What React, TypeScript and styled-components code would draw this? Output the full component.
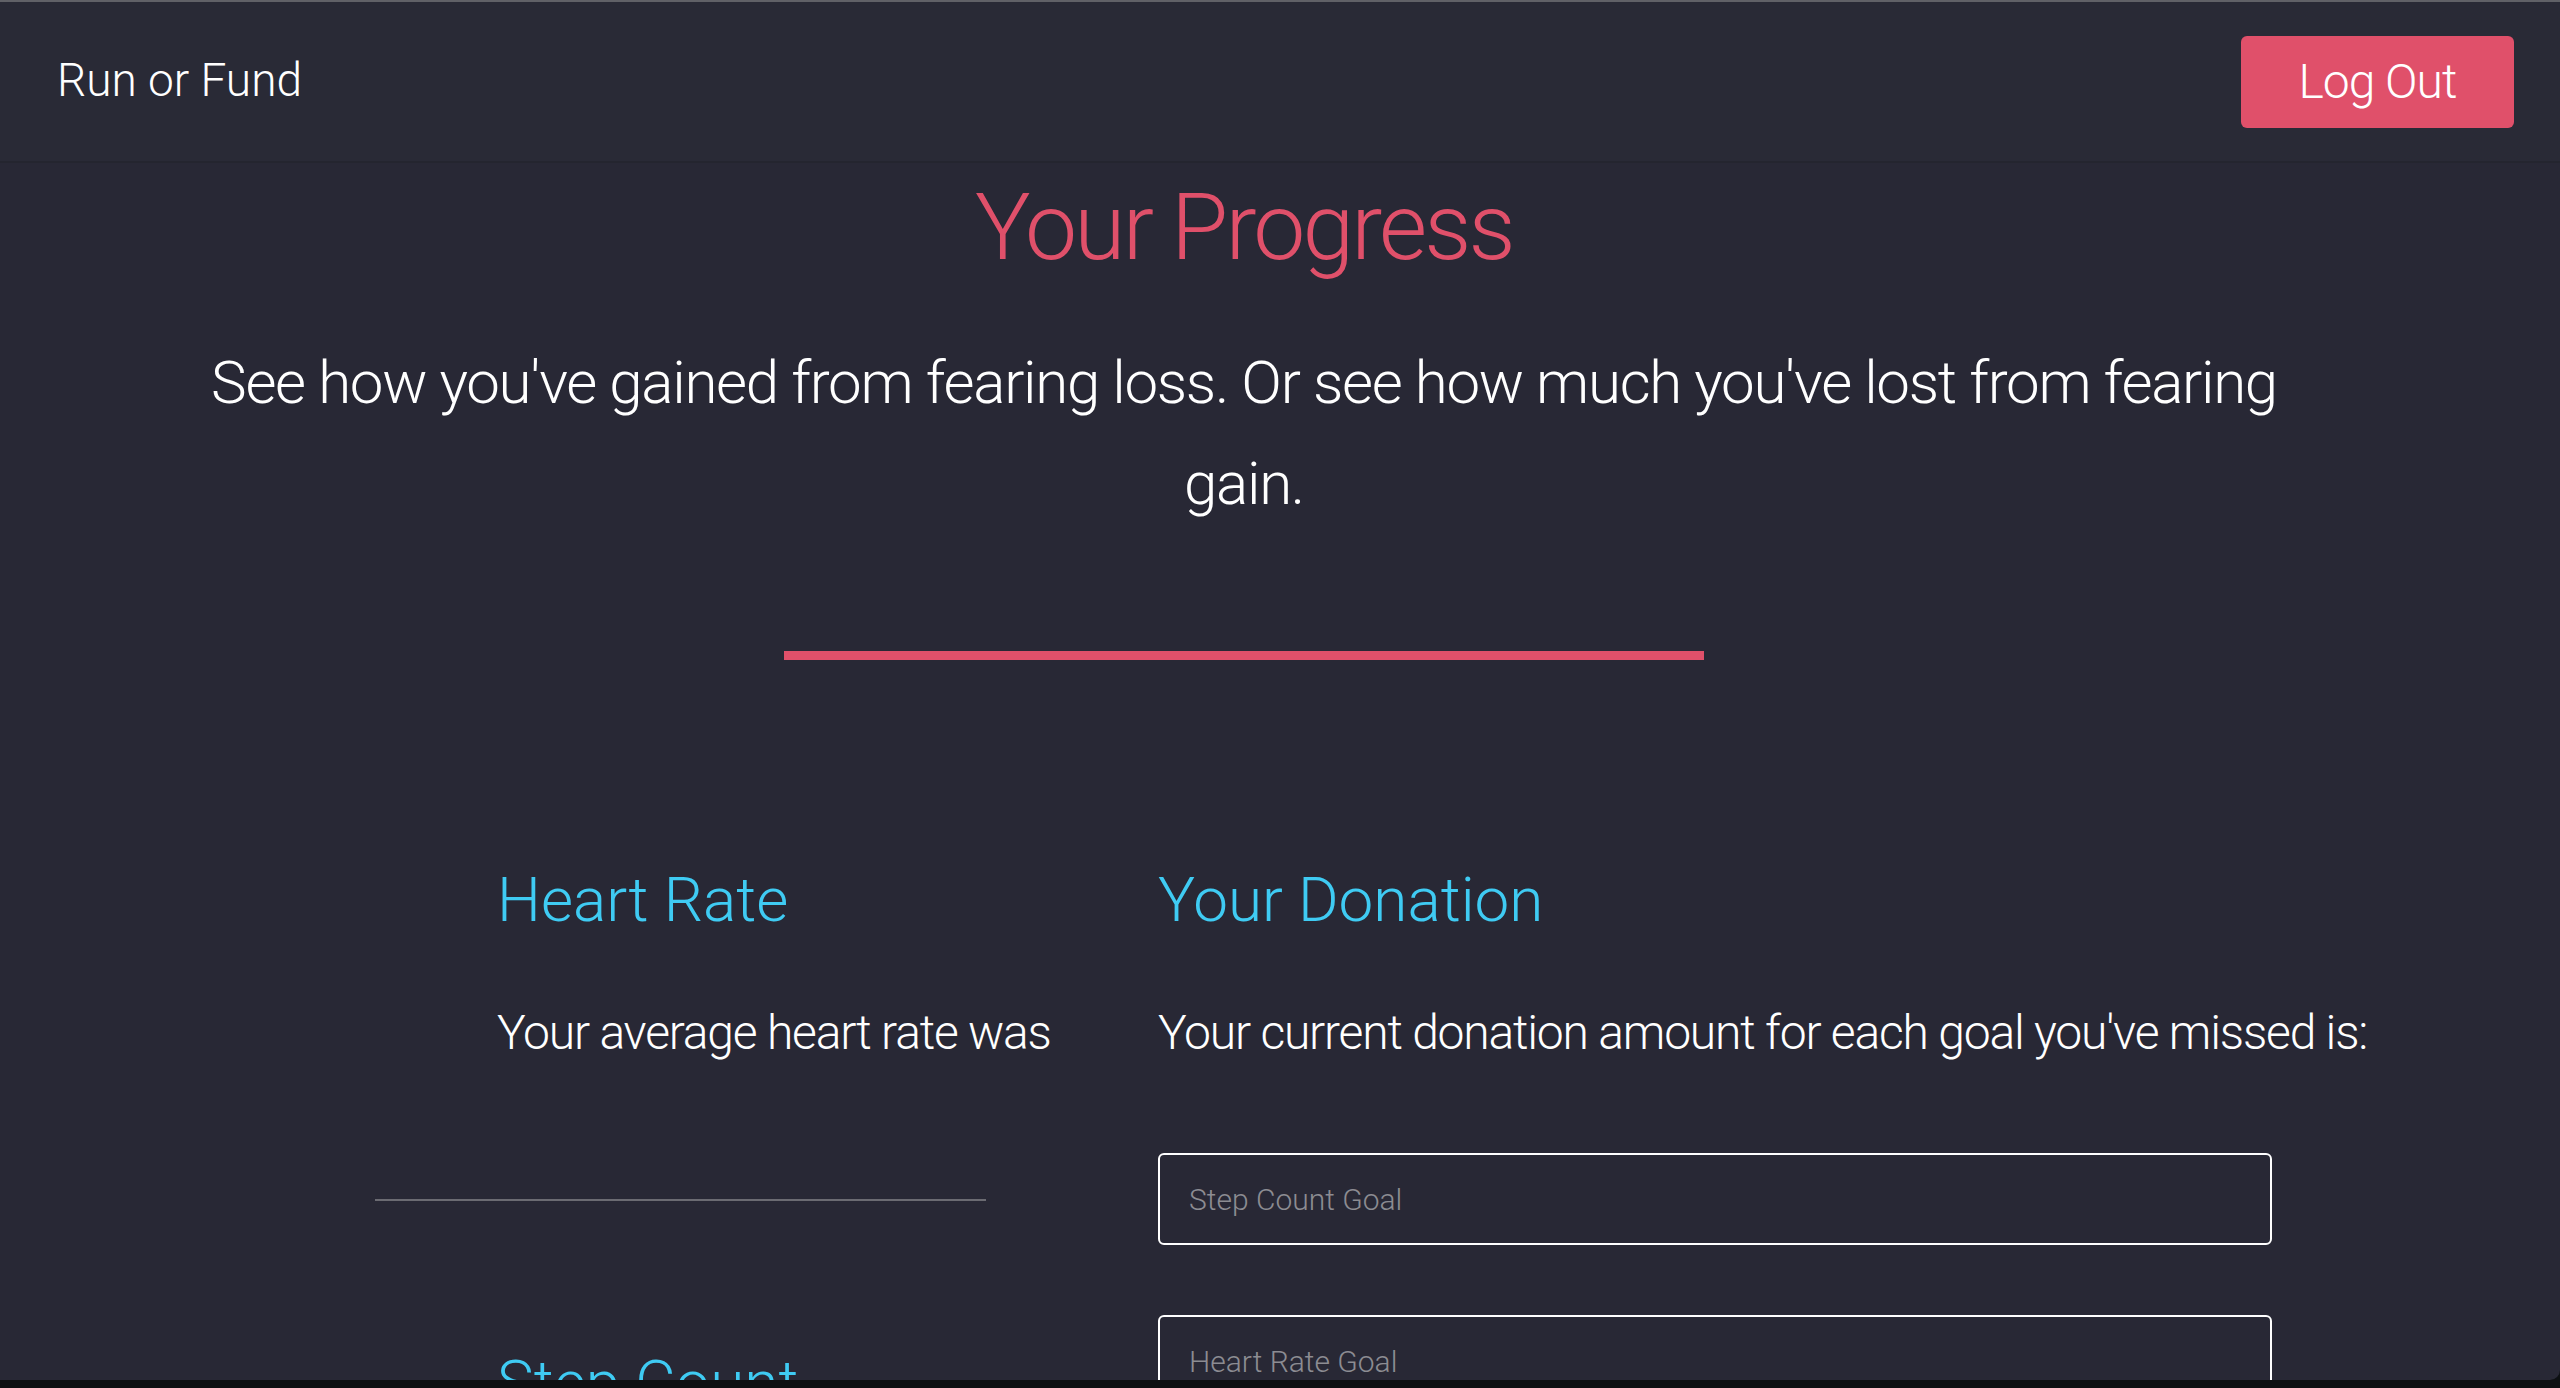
import styled, { createGlobalStyle } from 'styled-components';

const GlobalStyle = createGlobalStyle`
  html, body {
    margin: 0;
    padding: 0;
    background: #0d1012;
  }
  body {
    font-family: Roboto, "Noto Sans", "Liberation Sans", sans-serif;
    font-weight: 300;
    color: #ffffff;
  }
  * {
    box-sizing: border-box;
  }
`;

const Frame = styled.div`
  height: 1380px;
  overflow: hidden;
  background: #282835;
  border-top: 2px solid #606167;
  border-bottom-right-radius: 10px;
`;

const NavBar = styled.header`
  height: 161px;
  display: flex;
  align-items: center;
  justify-content: space-between;
  padding: 0 46px 0 57px;
  background: #292a36;
  border-bottom: 2px solid #24252f;
`;

const Brand = styled.a`
  font-size: 46px;
  color: #ffffff;
  text-decoration: none;
  margin-top: -4px;
`;

const LogOutButton = styled.button`
  width: 273px;
  height: 92px;
  border: none;
  border-radius: 6px;
  background: #e0506a;
  color: #ffffff;
  font-family: inherit;
  font-weight: 300;
  font-size: 48px;
  letter-spacing: -1px;
  cursor: pointer;
`;

const Main = styled.main`
  padding-right: 72px;
  display: flex;
  flex-direction: column;
  align-items: center;
`;

const Title = styled.h1`
  margin: 18px 0 0;
  font-size: 93px;
  line-height: 1;
  font-weight: 300;
  letter-spacing: -2.8px;
  color: #e0506a;
  text-align: center;
`;

const Lead = styled.p`
  margin: 58px 0 0;
  max-width: 2110px;
  font-size: 60px;
  line-height: 101px;
  letter-spacing: -1.3px;
  text-align: center;
`;

const Divider = styled.div`
  width: 920px;
  height: 9px;
  margin-top: 117px;
  background: #e0506a;
`;

const Stats = styled.section`
  align-self: stretch;
  display: grid;
  grid-template-columns: 783px 1114px;
  padding-left: 375px;
  margin-top: 203px;
`;

const Column = styled.div`
  display: flex;
  flex-direction: column;
`;

const StatTitle = styled.h2<{ $indent?: number; $gap?: number }>`
  margin: ${({ $gap }) => $gap ?? 0}px 0 0 ${({ $indent }) => $indent ?? 0}px;
  font-size: 62px;
  line-height: 1.2;
  font-weight: 300;
  color: #3fcbf3;
  white-space: nowrap;
`;

const StatText = styled.p<{ $indent?: number }>`
  margin: 60px 0 0 ${({ $indent }) => $indent ?? 0}px;
  font-size: 48px;
  line-height: 1.5;
  letter-spacing: -1.2px;
  white-space: nowrap;
`;

const Rule = styled.div`
  width: 611px;
  height: 2px;
  margin-top: 130px;
  background: #6b6b72;
`;

const GoalInput = styled.input<{ $gap: number }>`
  width: 100%;
  height: 92px;
  margin-top: ${({ $gap }) => $gap}px;
  padding: 0 29px;
  background: transparent;
  border: 2px solid #ffffff;
  border-radius: 6px;
  color: #ffffff;
  font-family: inherit;
  font-weight: 300;
  font-size: 30px;
  outline: none;

  &::placeholder {
    color: #8c8c92;
  }
`;

const App = () => {
  return (
    <>
      <GlobalStyle />
      <Frame>
        <NavBar>
          <Brand href="#">Run or Fund</Brand>
          <LogOutButton>Log Out</LogOutButton>
        </NavBar>
        <Main>
          <Title>Your Progress</Title>
          <Lead>
            See how you've gained from fearing loss. Or see how much you've lost
            from fearing gain.
          </Lead>
          <Divider />
          <Stats>
            <Column>
              <StatTitle $indent={122}>Heart Rate</StatTitle>
              <StatText $indent={122}>Your average heart rate was</StatText>
              <Rule />
              <StatTitle $indent={122} $gap={145}>
                Step Count
              </StatTitle>
            </Column>
            <Column>
              <StatTitle>Your Donation</StatTitle>
              <StatText>
                Your current donation amount for each goal you've missed is:
              </StatText>
              <GoalInput $gap={84} placeholder="Step Count Goal" />
              <GoalInput $gap={70} placeholder="Heart Rate Goal" />
            </Column>
          </Stats>
        </Main>
      </Frame>
    </>
  );
};

export default App;
